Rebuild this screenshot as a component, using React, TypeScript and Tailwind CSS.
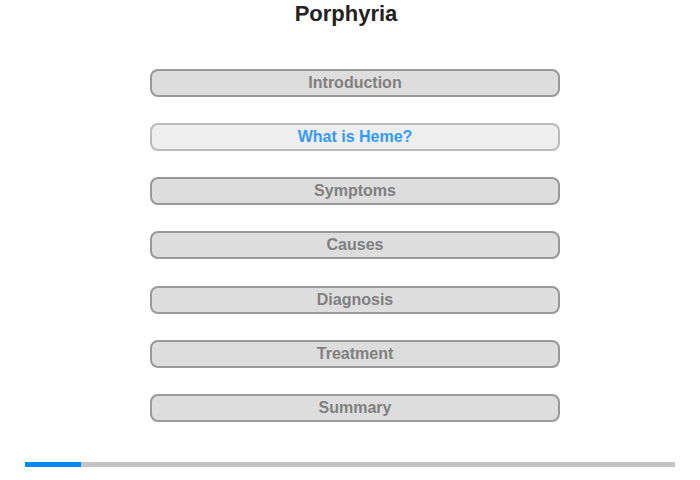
const sections = ['Introduction', 'What is Heme?', 'Symptoms', 'Causes', 'Diagnosis', 'Treatment', 'Summary'];

export default function App() {
  const active = 1;
  return (
    <div className="w-[700px] h-[480px] bg-white font-['Liberation_Sans',Arial,sans-serif] flex flex-col">
      <h1 className="text-[22px] leading-[28px] font-bold text-[#222] text-center pr-[8px]">Porphyria</h1>

      <div className="mt-[41px] ml-[150px] w-[410px] flex flex-col gap-[26.17px]">
        {sections.map((s, i) => (
          <button
            key={s}
            className={`h-[28px] rounded-[8px] border-2 text-[16px] font-bold leading-none ${
              i === active
                ? 'bg-[#eeeeee] border-[#bbbbbb] text-[#3399ff]'
                : 'bg-[#dddddd] border-[#999999] text-[#808080]'
            }`}
          >
            {s}
          </button>
        ))}
      </div>

      <div className="mt-[40px] mx-[25px] h-[5px] bg-[#c4c4c4] flex">
        <div className="w-[56px] bg-[#0088ff]" />
      </div>
    </div>
  );
}
